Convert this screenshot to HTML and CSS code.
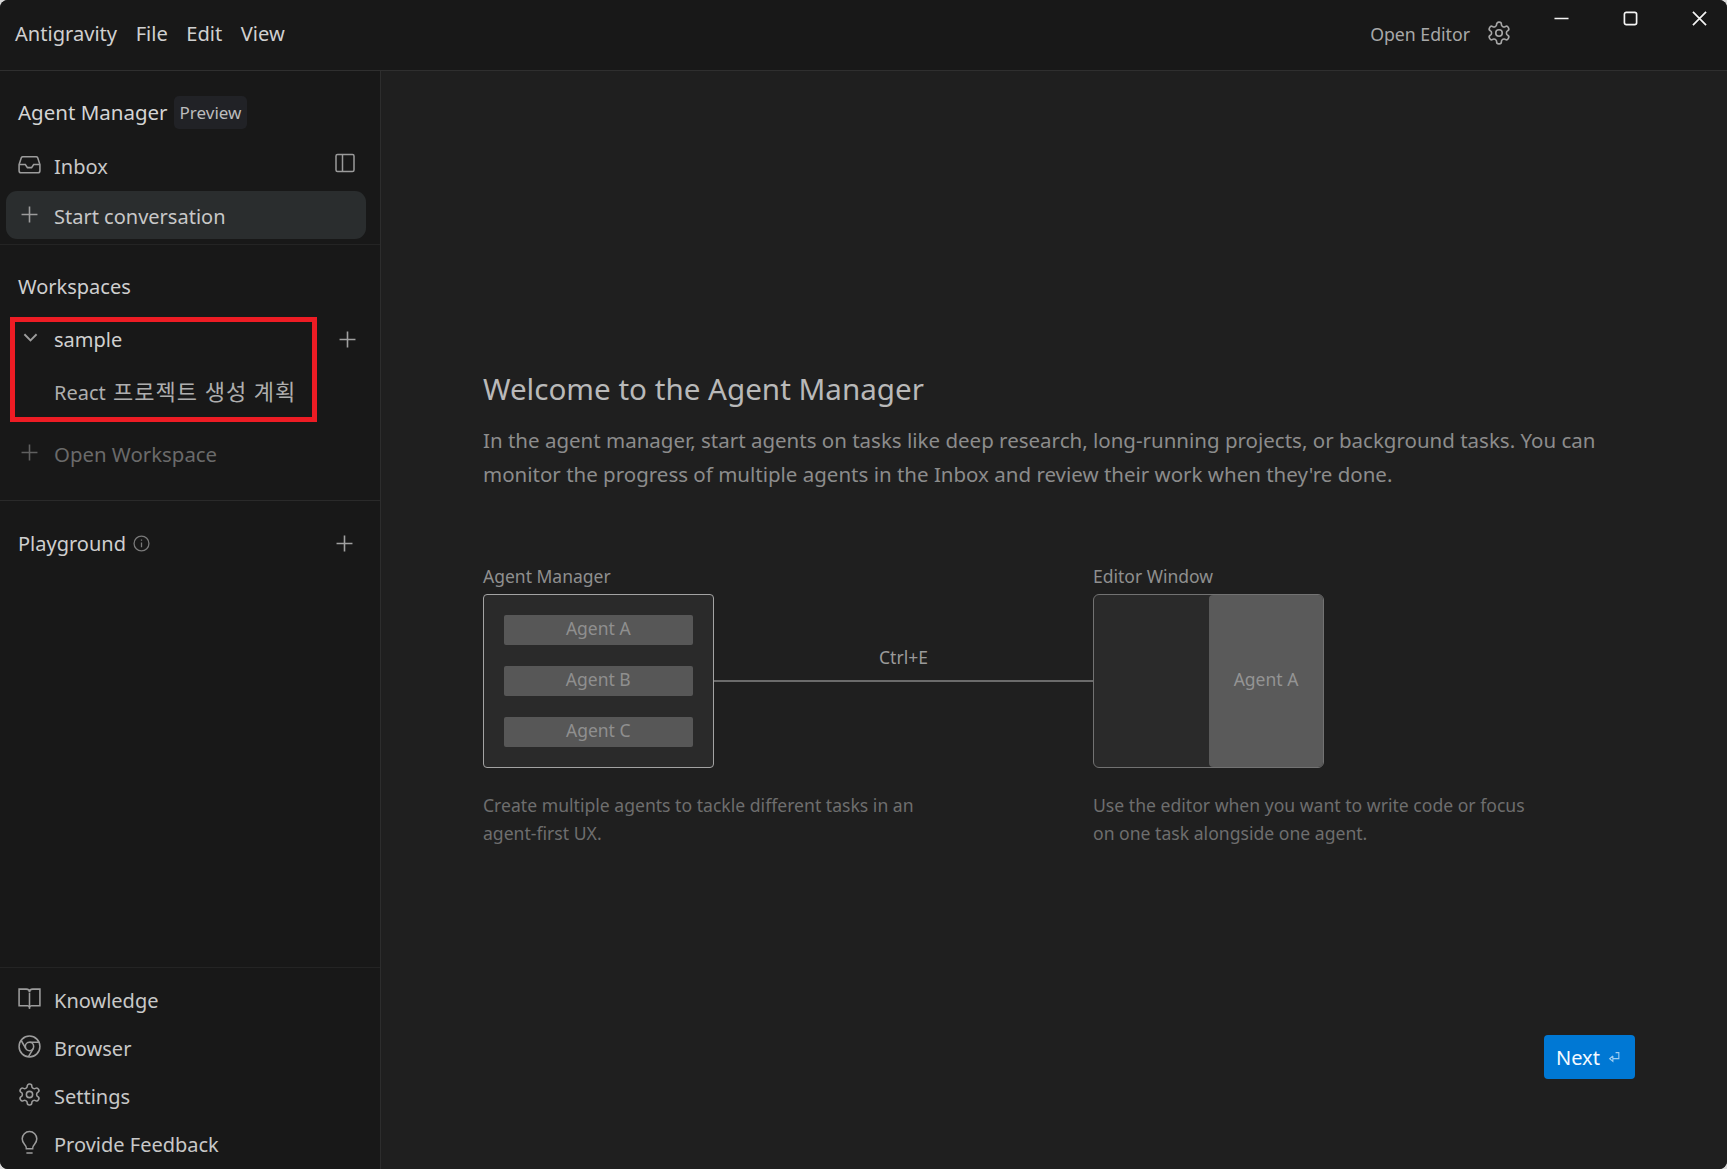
FILE: index.html
```html
<!DOCTYPE html>
<html lang="en">
<head>
<meta charset="utf-8">
<title>Antigravity</title>
<link rel="stylesheet" href="styles.css">
</head>
<body>
<div class="app">
  <header class="titlebar">
    <nav class="menu">
      <span>Antigravity</span><span>File</span><span>Edit</span><span>View</span>
    </nav>
    <div class="title-right">
      <span class="open-editor">Open Editor</span>
      <svg class="gear" viewBox="0 0 24 24"><circle cx="12" cy="12" r="3"/><path d="M12.22 2h-.44a2 2 0 0 0-2 2v.18a2 2 0 0 1-1 1.73l-.43.25a2 2 0 0 1-2 0l-.15-.08a2 2 0 0 0-2.73.73l-.22.38a2 2 0 0 0 .73 2.73l.15.1a2 2 0 0 1 1 1.72v.51a2 2 0 0 1-1 1.74l-.15.09a2 2 0 0 0-.73 2.73l.22.38a2 2 0 0 0 2.73.73l.15-.08a2 2 0 0 1 2 0l.43.25a2 2 0 0 1 1 1.73V20a2 2 0 0 0 2 2h.44a2 2 0 0 0 2-2v-.18a2 2 0 0 1 1-1.73l.43-.25a2 2 0 0 1 2 0l.15.08a2 2 0 0 0 2.73-.73l.22-.39a2 2 0 0 0-.73-2.73l-.15-.08a2 2 0 0 1-1-1.74v-.5a2 2 0 0 1 1-1.74l.15-.09a2 2 0 0 0 .73-2.73l-.22-.38a2 2 0 0 0-2.73-.73l-.15.08a2 2 0 0 1-2 0l-.43-.25a2 2 0 0 1-1-1.73V4a2 2 0 0 0-2-2z"/></svg>
      <div class="win-controls">
        <svg viewBox="0 0 16 16"><path d="M0.5 8h15"/></svg>
        <svg viewBox="0 0 16 16"><rect x="1.5" y="1.5" width="13" height="13" rx="2"/></svg>
        <svg viewBox="0 0 16 16"><path d="M1 1l14 14M15 1L1 15"/></svg>
      </div>
    </div>
  </header>
  <div class="body">
    <aside class="sidebar">
      <section class="sec-top">
        <div class="am-title"><span>Agent Manager</span><span class="badge">Preview</span></div>
        <div class="row inbox">
          <svg class="ico" viewBox="0 0 24 24"><path d="M2 12h6l2 3h4l2-3h6"/><path d="M5.5 4.5h13a1.5 1.5 0 0 1 1.3.8L22 12v6a2 2 0 0 1-2 2H4a2 2 0 0 1-2-2v-6l2.2-6.700a1.500 1.500 0 0 1 1.300-.800z"/></svg>
          <span class="grow">Inbox</span>
          <svg class="panel-ico" viewBox="0 0 20 20"><rect x="1" y="1.500" width="18" height="17" rx="1.500"/><path d="M7.500 1.500v17"/></svg>
        </div>
        <div class="row start">
          <svg class="ico plus" viewBox="0 0 16 16"><path d="M8 0.500v15M0.500 8h15"/></svg>
          <span>Start conversation</span>
        </div>
      </section>
      <section class="sec-work">
        <div class="sec-label">Workspaces</div>
        <div class="ws-group">
          <div class="row ws-head">
            <svg class="ico chev" viewBox="0 0 16 16"><path d="M1.500 4.500L8 11l6.500-6.500"/></svg>
            <span class="grow">sample</span>
            <svg class="add" viewBox="0 0 16 16"><path d="M8 0.500v15M0.500 8h15"/></svg>
          </div>
          <div class="row ws-item"><span>React <span class="ko">프로젝트 생성 계획</span></span></div>
          <div class="callout"></div>
        </div>
        <div class="row open-ws">
          <svg class="ico plus" viewBox="0 0 16 16"><path d="M8 0.500v15M0.500 8h15"/></svg>
          <span>Open Workspace</span>
        </div>
      </section>
      <section class="sec-play">
        <span class="play-label">Playground</span>
        <svg class="info" viewBox="0 0 16 16"><circle cx="8" cy="8" r="7"/><path d="M8 7v4.500M8 4.200v1.200"/></svg>
        <svg class="add end" viewBox="0 0 16 16"><path d="M8 0.500v15M0.500 8h15"/></svg>
      </section>
      <section class="sec-bottom">
        <div class="row foot">
          <svg class="ico" viewBox="0 0 24 24"><path d="M12 6.500V22"/><path d="M2 3h7a3 3 0 0 1 3 3 3 3 0 0 1 3-3h7v16h-8a2 2 0 0 0-2 1.500 2 2 0 0 0-2-1.500H2z"/></svg>
          <span>Knowledge</span>
        </div>
        <div class="row foot">
          <svg class="ico" viewBox="0 0 24 24"><circle cx="12" cy="12" r="10"/><circle cx="12" cy="12" r="4"/><path d="M12 8h9.200M8.500 14L3.900 6M15.500 14L10.900 22"/></svg>
          <span>Browser</span>
        </div>
        <div class="row foot">
          <svg class="ico" viewBox="0 0 24 24"><circle cx="12" cy="12" r="3"/><path d="M12.220 2h-.44a2 2 0 0 0-2 2v.18a2 2 0 0 1-1 1.730l-.43.25a2 2 0 0 1-2 0l-.15-.08a2 2 0 0 0-2.730.730l-.22.38a2 2 0 0 0 .73 2.730l.15.1a2 2 0 0 1 1 1.720v.51a2 2 0 0 1-1 1.740l-.15.09a2 2 0 0 0-.73 2.730l.22.38a2 2 0 0 0 2.730.730l.15-.08a2 2 0 0 1 2 0l.43.25a2 2 0 0 1 1 1.730V20a2 2 0 0 0 2 2h.44a2 2 0 0 0 2-2v-.18a2 2 0 0 1 1-1.730l.43-.25a2 2 0 0 1 2 0l.15.08a2 2 0 0 0 2.730-.73l.22-.39a2 2 0 0 0-.73-2.730l-.15-.08a2 2 0 0 1-1-1.740v-.5a2 2 0 0 1 1-1.740l.15-.09a2 2 0 0 0 .73-2.730l-.22-.38a2 2 0 0 0-2.730-.73l-.15.08a2 2 0 0 1-2 0l-.43-.25a2 2 0 0 1-1-1.730V4a2 2 0 0 0-2-2z"/></svg>
          <span>Settings</span>
        </div>
        <div class="row foot">
          <svg class="ico" viewBox="0 0 24 24"><path d="M9 18c0-2-.6-3-2-4.500A7.500 7.500 0 0 1 5 8.500a7 7 0 0 1 14 0 7.500 7.500 0 0 1-2 5c-1.400 1.500-2 2.500-2 4.500z"/><path d="M9 22h6"/></svg>
          <span>Provide Feedback</span>
        </div>
      </section>
    </aside>
    <main class="main">
      <div class="content">
        <h1>Welcome to the Agent Manager</h1>
        <p class="lead">In the agent manager, start agents on tasks like deep research, long-running projects, or background tasks. You can monitor the progress of multiple agents in the Inbox and review their work when they're done.</p>
        <div class="diagram">
          <div class="dia-col">
            <div class="dia-label">Agent Manager</div>
            <div class="box am-box">
              <div class="agent">Agent A</div>
              <div class="agent">Agent B</div>
              <div class="agent">Agent C</div>
            </div>
          </div>
          <div class="link">
            <span class="shortcut">Ctrl+E</span>
            <span class="wire"></span>
          </div>
          <div class="dia-col">
            <div class="dia-label">Editor Window</div>
            <div class="box ed-box">
              <div class="ed-left"></div>
              <div class="ed-right">Agent A</div>
            </div>
          </div>
        </div>
        <div class="captions">
          <p>Create multiple agents to tackle different tasks in an agent-first UX.</p>
          <p>Use the editor when you want to write code or focus on one task alongside one agent.</p>
        </div>
      </div>
      <div class="actions">
        <button class="next">Next
          <svg viewBox="0 0 12 12"><path d="M7 1.500h3v5.500H4.500M4.500 4.500v5L1.500 7.200l3-2.700"/></svg>
        </button>
      </div>
    </main>
  </div>
</div>
</body>
</html>
```
FILE: styles.css
```css
* { box-sizing: border-box; }
html, body { margin: 0; height: 100%; background: #d9d9d9; }
body { font-family: "Noto Sans", "Noto Sans CJK KR", sans-serif; color: #ccc; overflow: hidden; }
svg { fill: none; stroke: currentColor; flex: none; display: block; }
.app { height: 1169px; display: flex; flex-direction: column; background: #181818; border-radius: 8px; overflow: hidden; }

.titlebar { height: 71px; flex: none; display: flex; justify-content: space-between; border-bottom: 1px solid #2f2f2f; background: #181818; }
.menu { display: flex; gap: 18.500px; padding: 0 0 0 15px; align-items: center; font-size: 20.100px; color: #d0d0d0; height: 66px; }
.title-right { display: flex; align-items: flex-start; }
.open-editor { font-size: 17.700px; color: #a8a8a8; margin-top: 22px; }
.gear { width: 26px; height: 26px; color: #a6a6a6; stroke-width: 1.500; margin: 20px 0 0 16px; }
.win-controls { display: flex; gap: 54px; margin: 11px 20px 0 42px; color: #f4f4f4; }
.win-controls svg { width: 15px; height: 15px; stroke-width: 1.800; }

.body { flex: 1; display: flex; min-height: 0; }
.sidebar { width: 381px; flex: none; display: flex; flex-direction: column; border-right: 1px solid #2d2d2d; background: #181818; font-size: 20px; }
.row { display: flex; align-items: center; }
.ico { width: 25px; height: 25px; color: #9c9c9c; stroke-width: 1.500; margin: -4px 12px 0 17px; }
.grow { flex: 1; }

.sec-top { padding: 24px 14px 5px 6px; border-bottom: 1px solid #242424; }
.am-title { display: flex; align-items: center; height: 34px; padding-left: 12px; color: #d4d4d4; font-size: 20.500px; }
.badge { margin-left: 6px; background: #212226; border-radius: 5px; height: 33px; padding: 0 6px; display: flex; align-items: center; font-size: 17px; color: #bcbcbc; }
.inbox { height: 48px; margin-top: 13px; margin-left: -6px; color: #c8c8c8; }
.panel-ico { width: 20px; height: 20px; color: #9a9a9a; stroke-width: 1.500; margin: -6px 11px 0 0; }
.start { height: 48px; margin-top: 1px; padding-top: 2px; background: #2a2d2e; border-radius: 11px; color: #c8c8c8; }

.sec-work { padding: 25px 0 26px; border-bottom: 1px solid #2a2a2a; height: 256px; flex: none; }
.sec-label { padding-left: 18px; height: 34px; line-height: 34px; color: #cfcfcf; }
.ws-group { position: relative; margin-top: 9px; }
.ws-head { height: 52px; color: #d0d0d0; padding-right: 24px; }
.chev { width: 15px; height: 15px; margin: -4px 16px 0 23px; stroke-width: 2; }
.plus { width: 17px; height: 17px; }
.start .plus { margin-left: 15px; margin-right: 16px; }
.open-ws .plus { margin-left: 21px; margin-right: 16px; color: #606060; }
.add { width: 17px; height: 17px; color: #a0a0a0; stroke-width: 1.500; }
.ws-item { height: 49px; padding-left: 54px; color: #aeaeae; }
.ko { font-size: 22px; letter-spacing: 1px; margin-left: 2px; }
.callout { position: absolute; left: 10px; top: 4px; width: 307px; height: 105px; border: 5px solid #ed1c24; pointer-events: none; }
.open-ws { height: 48px; margin-top: 16px; color: #6a6a6a; font-size: 20.400px; }

.sec-play { display: flex; align-items: center; height: 84px; padding: 0 27px 0 18px; color: #cfcfcf; flex: none; }
.play-label { font-size: 20px; }
.info { width: 17px; height: 17px; margin-left: 7px; color: #7a7a7a; stroke-width: 1.200; }
.end { margin-left: auto; }

.sec-bottom { margin-top: auto; border-top: 1px solid #242424; padding: 8px 0 0; height: 202px; }
.foot { height: 48px; color: #c8c8c8; }

.main { flex: 1; background: #1f1f1f; display: flex; flex-direction: column; position: relative; }
.content { padding: 298px 0 0 102px; width: 1240px; }
h1 { margin: 0; font-weight: 400; font-size: 29.600px; line-height: 40px; color: #b9b9b9; }
.lead { margin: 14px 0 0; font-size: 20.500px; line-height: 34px; color: #8c8c8c; width: 1130px; }
.diagram { display: flex; margin-top: 72px; }
.dia-col { width: 231px; flex: none; }
.dia-label { font-size: 17.500px; line-height: 26px; color: #8f8f8f; height: 31px; }
.box { width: 231px; height: 174px; background: #2a2a2a; border-radius: 4px; }
.am-box { border: 1.500px solid #a3a3a3; padding: 20px 20px 0 19.500px; display: flex; flex-direction: column; gap: 21px; }
.agent { height: 30px; background: #575757; border-radius: 2px; color: #8f8f8f; font-size: 17.500px; text-align: center; line-height: 27px; }
.link { width: 379px; flex: none; display: flex; flex-direction: column; align-items: center; padding-top: 81px; }
.shortcut { font-size: 17.500px; line-height: 26px; color: #9a9a9a; height: 27px; }
.wire { display: block; width: 100%; height: 2px; margin-top: 9px; background: #6b6b6b; }
.ed-box { border: 1.500px solid #727272; border-radius: 6px; display: flex; overflow: hidden; }
.ed-left { width: 115px; }
.ed-right { flex: 1; padding-bottom: 4px; background: #5a5a5a; border-radius: 4px 0 0 4px; display: flex; align-items: center; justify-content: center; color: #949494; font-size: 17.500px; }
.captions { display: flex; margin-top: 23px; gap: 168px; }
.captions p { margin: 0; width: 442px; font-size: 17.600px; line-height: 28px; color: #6e6e6e; }
.actions { position: absolute; left: 1163px; top: 964px; }
.next { width: 91px; height: 44px; background: #0078d4; border: 0; border-radius: 4px; color: #f5faff; font: 20px "Noto Sans", sans-serif; display: flex; align-items: center; padding: 0 0 0 12px; gap: 8px; }
.next svg { width: 13px; height: 13px; color: #9fcdf0; stroke-width: 1; }
```
